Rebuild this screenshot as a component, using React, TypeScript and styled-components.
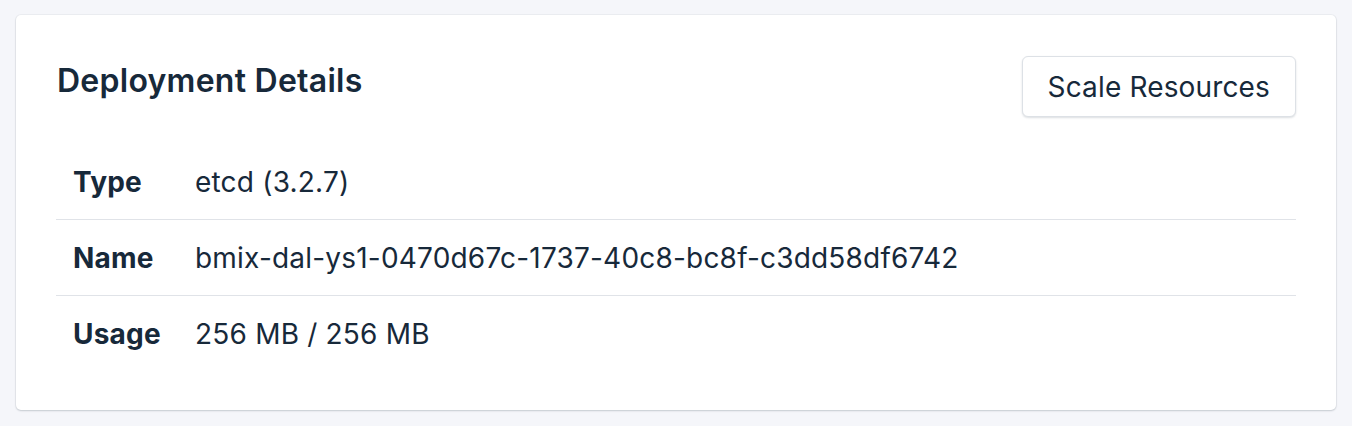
import React from "react";
import styled, { createGlobalStyle } from "styled-components";

const Global = createGlobalStyle`
  html, body { margin: 0; padding: 0; background: #f5f6fa; }
  body { font-family: Inter, "Noto Sans", "Liberation Sans", sans-serif; color: #17293a; }
  * { box-sizing: border-box; }
`;

const Page = styled.div`
  padding: 15px 16px 16px 16px;
`;

const Card = styled.section`
  background: #ffffff;
  border-radius: 5px;
  box-shadow: 0 1px 2px rgba(23, 41, 58, 0.18), 0 0 0 1px rgba(23, 41, 58, 0.04);
  padding: 41px 40px 38px 40px;
`;

const Header = styled.div`
  display: flex;
  justify-content: space-between;
  align-items: flex-start;
  height: 61px;
  margin-bottom: 27px;
`;

const Title = styled.h2`
  margin: 7px 0 0 1px;
  font-size: 32px;
  font-weight: 600;
  letter-spacing: 0.25px;
  line-height: 36px;
`;

const Button = styled.button`
  font-family: inherit;
  font-size: 28px;
  font-weight: 400;
  letter-spacing: 0.15px;
  color: #17293a;
  background: #ffffff;
  border: 1px solid #dde1e6;
  border-radius: 6px;
  box-shadow: 0 1px 2px rgba(23, 41, 58, 0.15);
  height: 61px;
  padding: 0 25px;
  margin-right: 0;
  cursor: pointer;
`;

const Table = styled.div`
  display: flex;
  flex-direction: column;
`;

const Row = styled.div<{ $last?: boolean }>`
  display: grid;
  grid-template-columns: 122px 1fr;
  align-items: center;
  height: 76px;
  border-bottom: ${(p) => (p.$last ? "none" : "1px solid #e0e3e8")};
  padding-left: 17px;
`;

const Label = styled.div`
  font-size: 28px;
  font-weight: 700;
  letter-spacing: 0.2px;
`;

const Value = styled.div`
  font-size: 28px;
  font-weight: 400;
  letter-spacing: 0.2px;
`;

const rows = [
  { label: "Type", value: "etcd (3.2.7)" },
  { label: "Name", value: "bmix-dal-ys1-0470d67c-1737-40c8-bc8f-c3dd58df6742" },
  { label: "Usage", value: "256 MB / 256 MB" },
];

export default function App() {
  return (
    <Page>
      <Global />
      <Card>
        <Header>
          <Title>Deployment Details</Title>
          <Button>Scale Resources</Button>
        </Header>
        <Table>
          {rows.map((r, i) => (
            <Row key={r.label} $last={i === rows.length - 1}>
              <Label>{r.label}</Label>
              <Value>{r.value}</Value>
            </Row>
          ))}
        </Table>
      </Card>
    </Page>
  );
}
